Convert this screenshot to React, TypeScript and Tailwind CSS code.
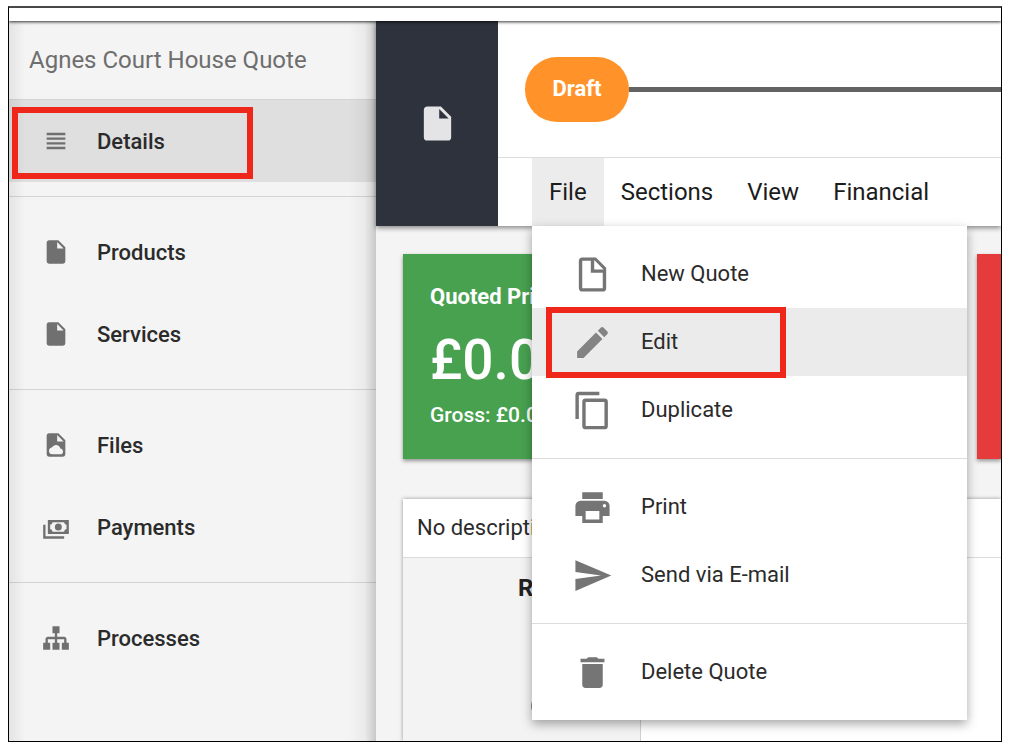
import React, { type ReactNode } from "react";

const icons = {
  headline: "M4,15H20V13H4V15M4,19H20V17H4V19M4,11H20V9H4V11M4,5V7H20V5H4Z",
  file: "M13,9V3.5L18.5,9M6,2C4.89,2 4,2.89 4,4V20A2,2 0 0,0 6,22H18A2,2 0 0,0 20,20V8L14,2H6Z",
  fileOutline:
    "M13,9H18.5L13,3.5V9M6,2H14L20,8V20A2,2 0 0,1 18,22H6C4.89,22 4,21.1 4,20V4C4,2.89 4.89,2 6,2M11,4H6V20H11L18,20V11H11V4Z",
  fileCloud:
    "M6,2C4.89,2 4,2.89 4,4V20A2,2 0 0,0 6,22H18A2,2 0 0,0 20,20V8L14,2H6ZM13,9V3.5L18.5,9H13ZM15.68,15C15.34,13.3 13.82,12 12,12C10.55,12 9.3,12.82 8.68,14C7.17,14.18 6,15.45 6,17A3,3 0 0,0 9,20H15.5A2.5,2.5 0 0,0 18,17.5C18,16.18 16.97,15.11 15.68,15Z",
  cash: "M5,6H23V18H5V6M14,9A3,3 0 0,1 17,12A3,3 0 0,1 14,15A3,3 0 0,1 11,12A3,3 0 0,1 14,9M9,8A2,2 0 0,1 7,10V14A2,2 0 0,1 9,16H19A2,2 0 0,1 21,14V10A2,2 0 0,1 19,8H9M1,10H3V20H19V22H1V10Z",
  sitemap:
    "M9,2V8H11V11H5C3.89,11 3,11.89 3,13V16H1V22H7V16H5V13H11V16H9V22H15V16H13V13H19V16H17V22H23V16H21V13C21,11.89 20.11,11 19,11H13V8H15V2H9Z",
  pencil:
    "M20.71,7.04C21.1,6.65 21.1,6 20.71,5.63L18.37,3.29C18,2.9 17.35,2.9 16.96,3.29L15.12,5.12L18.87,8.87M3,17.25V21H6.75L17.81,9.93L14.06,6.18L3,17.25Z",
  copy: "M19,21H8V7H19M19,5H8A2,2 0 0,0 6,7V21A2,2 0 0,0 8,23H19A2,2 0 0,0 21,21V7A2,2 0 0,0 19,5M16,1H4A2,2 0 0,0 2,3V17H4V3H16V1Z",
  printer:
    "M18,3H6V7H18M19,12A1,1 0 0,1 18,11A1,1 0 0,1 19,10A1,1 0 0,1 20,11A1,1 0 0,1 19,12M16,19H8V14H16M19,8H5A3,3 0 0,0 2,11V17H6V21H18V17H22V11A3,3 0 0,0 19,8Z",
  send: "M2,21L23,12L2,3V10L17,12L2,14V21Z",
  trash:
    "M19,4H15.5L14.5,3H9.5L8.5,4H5V6H19M6,19A2,2 0 0,0 8,21H16A2,2 0 0,0 18,19V7H6V19Z",
};

type IconName = keyof typeof icons;

function Icon({ name, className }: { name: IconName; className: string }) {
  return (
    <svg viewBox="0 0 24 24" fill="currentColor" fillRule="evenodd" aria-hidden="true" className={className}>
      <path d={icons[name]} />
    </svg>
  );
}

function Callout({ className }: { className: string }) {
  return <span aria-hidden="true" className={`pointer-events-none absolute z-10 border-6 border-[#ef271b] ${className}`} />;
}

function SideLink({ icon, label, active, children }: { icon: IconName; label: string; active?: boolean; children?: ReactNode }) {
  return (
    <a
      href="#"
      className={`relative flex h-[82px] items-center gap-[27px] pl-[33px] text-[22px] font-medium text-[#2b2b2b] ${active ? "bg-[#dfdfdf]" : ""}`}
    >
      <Icon name={icon} className="size-7 text-[#707070]" />
      <span>{label}</span>
      {children}
    </a>
  );
}

function MenuItem({ icon, label, active, children }: { icon: IconName; label: string; active?: boolean; children?: ReactNode }) {
  return (
    <button
      type="button"
      role="menuitem"
      className={`relative flex h-[68px] w-full items-center gap-7 pl-10 text-[#2b2b2b] ${active ? "bg-[#ebebeb]" : ""}`}
    >
      <Icon name={icon} className={`size-[41px] ${active ? "text-[#838383]" : "text-[#757575]"}`} />
      <span>{label}</span>
      {children}
    </button>
  );
}

function Tab({ label }: { label: string }) {
  return (
    <button type="button" className="px-[17px]">
      {label}
    </button>
  );
}

function FileMenu() {
  return (
    <div
      role="menu"
      className="absolute top-full left-0 z-30 w-[435px] bg-white text-[22px] shadow-[0_4px_10px_rgba(0,0,0,0.35)]"
    >
      <div className="py-3.5">
        <MenuItem icon="fileOutline" label="New Quote" />
        <MenuItem icon="pencil" label="Edit" active>
          <Callout className="-top-px left-3.5 h-[71px] w-60" />
        </MenuItem>
        <MenuItem icon="copy" label="Duplicate" />
      </div>
      <div className="border-t border-[#dcdcdc] py-3.5">
        <MenuItem icon="printer" label="Print" />
        <MenuItem icon="send" label="Send via E-mail" />
      </div>
      <div className="border-t border-[#dcdcdc] py-3.5">
        <MenuItem icon="trash" label="Delete Quote" />
      </div>
    </div>
  );
}

function Sidebar() {
  return (
    <nav className="relative w-[367px] shrink-0 bg-[#f4f4f4]">
      <h1 className="flex h-[78px] items-center pl-5 text-2xl text-[#6e6e6e]">Agnes Court House Quote</h1>
      <div className="border-t border-[#d4d4d4] pb-3.5">
        <SideLink icon="headline" label="Details" active>
          <Callout className="top-[7px] left-[3px] h-[72px] w-[241px]" />
        </SideLink>
      </div>
      <div className="border-t border-[#d4d4d4] py-3.5">
        <SideLink icon="file" label="Products" />
        <SideLink icon="file" label="Services" />
      </div>
      <div className="border-t border-[#d4d4d4] py-3.5">
        <SideLink icon="fileCloud" label="Files" />
        <SideLink icon="cash" label="Payments" />
      </div>
      <div className="border-t border-[#d4d4d4] py-3.5">
        <SideLink icon="sitemap" label="Processes" />
      </div>
      <div className="pointer-events-none absolute inset-y-0 right-0 w-7 bg-linear-to-l from-black/18 via-black/4 via-40% to-transparent" />
      <div className="pointer-events-none absolute inset-y-0 left-0 w-4 bg-linear-to-r from-black/7 to-transparent" />
    </nav>
  );
}

function QuoteHeader() {
  return (
    <header className="relative z-10 flex bg-white shadow-[0_2px_5px_rgba(0,0,0,0.45)]">
      <div className="flex w-[122px] shrink-0 items-center justify-center bg-[#2e323d]">
        <Icon name="file" className="size-[41px] text-[#e4e4e6]" />
      </div>
      <div className="min-w-0 flex-1">
        <div className="flex h-[136px] items-center pl-[27px]">
          <button type="button" className="h-[65px] w-[104px] rounded-[32px] bg-[#ff9329] pb-0.5 text-[22px] font-bold text-white">
            Draft
          </button>
          <div className="h-[5px] flex-1 bg-[#636363]" />
        </div>
        <div className="flex h-[69px] border-t border-[#dcdcdc] pl-[34px] text-2xl text-[#1c1c1c]">
          <div className="relative flex">
            <button type="button" aria-haspopup="menu" aria-expanded="true" className="bg-[#ececec] px-[17px]">
              File
            </button>
            <FileMenu />
          </div>
          <Tab label="Sections" />
          <Tab label="View" />
          <Tab label="Financial" />
        </div>
      </div>
    </header>
  );
}

export default function App() {
  return (
    <div className="flex min-h-screen flex-col bg-white pt-1.5 pr-[11px] pb-[11px] pl-2 font-[Roboto,sans-serif]">
      <div className="flex flex-1 flex-col overflow-hidden border border-t-2 border-black border-t-[#484848]">
        <div className="relative z-20 h-[13px] bg-white shadow-[0_1px_3px_rgba(0,0,0,0.8)]" />
        <div className="flex flex-1">
          <Sidebar />
          <main className="flex min-w-0 flex-1 flex-col bg-[#f4f4f4]">
            <QuoteHeader />
            <div className="flex flex-1 flex-col gap-10 pt-7 pl-[27px]">
              <div className="flex gap-7">
                <section className="h-[205px] flex-1 bg-[#47a14f] px-[27px] pt-[27px] text-white shadow-[0_2px_4px_rgba(0,0,0,0.4)]">
                  <h2 className="text-[22px] leading-8 font-bold">Quoted Price</h2>
                  <p className="text-[55px] leading-[94px] font-medium">£0.00</p>
                  <p className="text-[21px] leading-4 font-medium">Gross: £0.00</p>
                </section>
                <section className="w-6 bg-[#e53b3b] shadow-[0_2px_4px_rgba(0,0,0,0.4)]" />
              </div>
              <section className="flex flex-1 flex-col bg-white shadow-[0_0_4px_rgba(0,0,0,0.4)]">
                <p className="flex h-[59px] items-center border-b border-[#dcdcdc] pb-0.5 pl-3.5 text-[22px] text-[#2b2b2b]">
                  No description
                </p>
                <div className="flex flex-1">
                  <div className="w-[238px] border-r border-[#cfcfcf] bg-[#f3f3f3] pt-3.5 pl-[115px]">
                    <h3 className="text-2xl leading-8 font-bold text-[#222222]">Ref</h3>
                    <svg viewBox="0 0 24 24" fill="none" stroke="#8a8a8a" strokeWidth="2" className="mt-[90px] ml-3 size-6" aria-hidden="true">
                      <circle cx="12" cy="12" r="10" />
                    </svg>
                  </div>
                </div>
              </section>
            </div>
          </main>
        </div>
      </div>
    </div>
  );
}
